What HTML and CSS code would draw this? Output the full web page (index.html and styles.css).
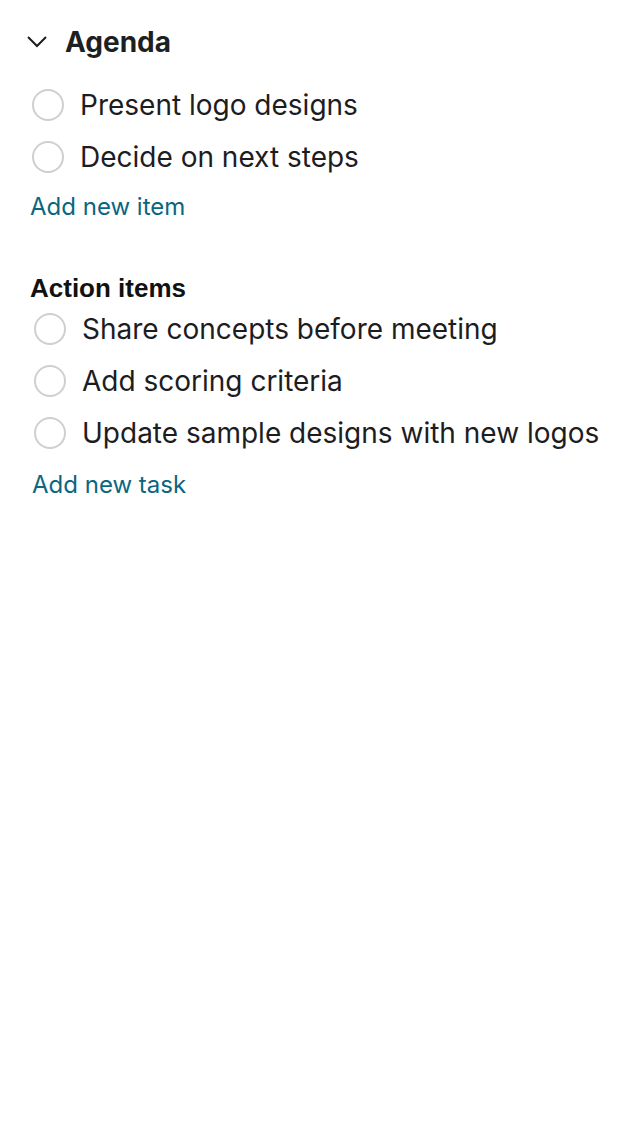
FILE: index.html
```html
<!DOCTYPE html>
<html>
<head>
<meta charset="utf-8">
<link rel="stylesheet" href="styles.css">
</head>
<body>
<div class="page">
  <section class="agenda">
    <div class="agenda-head">
      <svg class="chevron" width="20" height="12" viewBox="0 0 20 12"><path d="M1 1 L10 10 L19 1" fill="none" stroke="#1d1d1f" stroke-width="2"/></svg>
      <h2 class="agenda-title">Agenda</h2>
    </div>
    <ul class="list list-agenda">
      <li class="item"><span class="check"></span><span class="label">Present logo designs</span></li>
      <li class="item"><span class="check"></span><span class="label">Decide on next steps</span></li>
    </ul>
    <a class="add-link add-item">Add new item</a>
  </section>
  <section class="actions">
    <h3 class="actions-title">Action items</h3>
    <ul class="list list-actions">
      <li class="item"><span class="check"></span><span class="label">Share concepts before meeting</span></li>
      <li class="item"><span class="check"></span><span class="label">Add scoring criteria</span></li>
      <li class="item"><span class="check"></span><span class="label">Update sample designs with new logos</span></li>
    </ul>
    <a class="add-link add-task">Add new task</a>
  </section>
</div>
</body>
</html>
```
FILE: styles.css
```css
* { box-sizing: border-box; }
html, body { margin: 0; padding: 0; background: #fff; }
body { font-family: Inter, "Noto Sans", sans-serif; color: #1d1d1f; }
.page { padding: 24px 30px 0 30px; width: 640px; }
.agenda-head { display: flex; align-items: center; height: 36px; }
.chevron { margin-left: -3px; margin-right: 18px; display: block; }
.agenda-title { margin: 0; font-size: 28px; font-weight: 700; line-height: 36px; color: #1d1f22; }
.list { list-style: none; margin: 0; padding: 0; }
.list-agenda { margin-top: 19px; margin-left: 2px; }
.item { display: flex; align-items: center; height: 52px; }
.check { width: 32px; height: 32px; border: 2px solid #cfcfcf; border-radius: 50%; flex: none; }
.label { margin-left: 16px; font-size: 28px; line-height: 34px; color: #1d1d1f; white-space: nowrap; }
.add-link { display: block; color: #0b6681; font-size: 24px; line-height: 28px; }
.add-item { margin-top: 10px; }
.actions { margin-top: 52px; }
.actions-title { margin: 0; font-family: "Liberation Sans", Arial, sans-serif; font-weight: 700; font-size: 26px; line-height: 30px; color: #111; }
.list-actions { margin-left: 4px; }
.add-task { margin-left: 2px; margin-top: 12px; }
```
